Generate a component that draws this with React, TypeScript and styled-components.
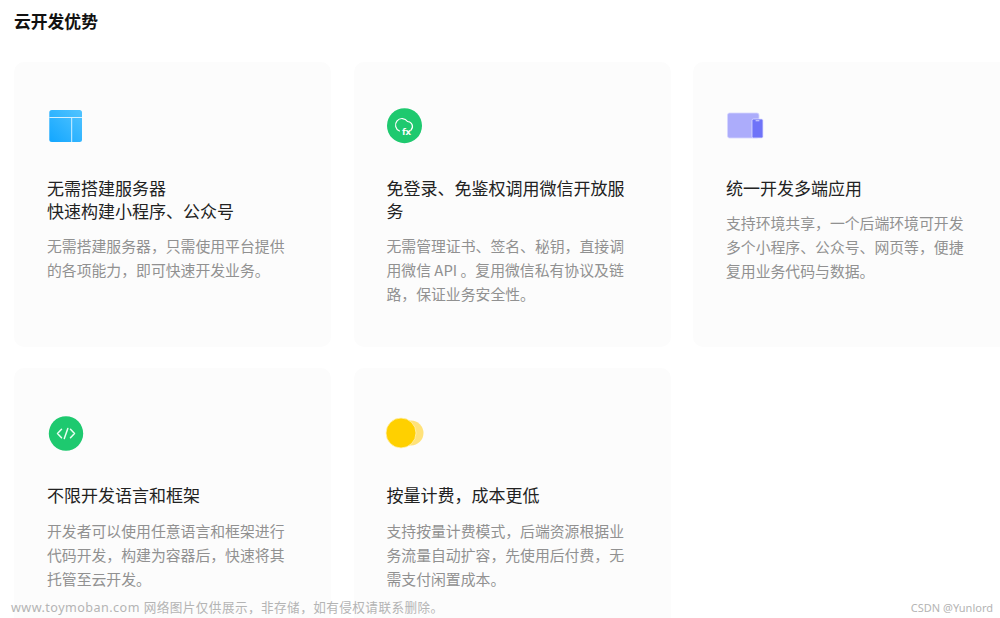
import React from "react";
import styled, { createGlobalStyle } from "styled-components";

const Global = createGlobalStyle`
  html, body { margin: 0; padding: 0; background: #fff; }
  body { width: 1000px; height: 618px; overflow: hidden; font-family: "Noto Sans CJK SC", "Noto Sans", sans-serif; }
`;
const Page = styled.div`
  position: relative;
  width: 1000px;
  height: 618px;
  overflow: hidden;
  padding: 9px 0 0 14px;
  box-sizing: border-box;
`;
const Heading = styled.h2`
  margin: 0 0 27.5px;
  font-size: 16.8px;
  line-height: 25px;
  font-weight: 700;
  color: #111;
`;
const Grid = styled.div`
  display: grid;
  grid-template-columns: repeat(3, 317px);
  grid-auto-rows: 285.5px;
  column-gap: 22.5px;
  row-gap: 21px;
  width: 1010px;
`;
const Card = styled.section`
  background: #fcfcfc;
  border-radius: 10px;
  padding: 46.5px 33px 0;
  box-sizing: border-box;
`;
const IconBox = styled.div`
  width: 36px;
  height: 36px;
  margin-bottom: 32px;
  svg { display: block; overflow: visible; }
`;
const Title = styled.h3<{ $gap: number }>`
  margin: 0 0 ${(p) => p.$gap}px;
  min-height: 23px;
  font-size: 17px;
  line-height: 23px;
  font-weight: 400;
  color: #222;
`;
const Desc = styled.p`
  margin: 0;
  font-size: 14.85px;
  line-height: 24px;
  color: #919191;
`;
const Mark = styled.div`
  position: absolute;
  bottom: 0;
  line-height: 20px;
  color: #b4b4b4;
`;
const LeftMark = styled(Mark)`
  left: 11px;
  font-family: "Noto Sans", "Noto Sans CJK SC", sans-serif;
  font-size: 12.6px;
  letter-spacing: 0.45px;
`;
const RightMark = styled(Mark)`
  right: 7px;
  font-family: "Noto Sans", sans-serif;
  font-size: 11px;
`;

const Panel = () => (
  <svg width="36" height="36" viewBox="0 0 36 36">
    <defs>
      <linearGradient id="pg" x1="0" y1="1" x2="1" y2="0">
        <stop offset="0" stopColor="#12a6ff" />
        <stop offset="1" stopColor="#52c4ff" />
      </linearGradient>
    </defs>
    <rect x="2.3" y="2" width="32.7" height="32" rx="2.5" fill="url(#pg)" />
    <path d="M2.3 9.5H35M24.7 9.5V34" stroke="#d4f0ff" strokeWidth="1" fill="none" />
  </svg>
);
const CloudFx = () => (
  <svg width="36" height="36" viewBox="0 0 36 36">
    <circle cx="17.5" cy="17.7" r="17.5" fill="#1ec96f" />
    <path
      d="M12.5 23 A6.5 6.5 0 1 1 20.5 13.5 A5 5 0 0 1 24 22"
      stroke="#fff" strokeWidth="1.2" fill="none" strokeLinecap="round"
    />
    <text x="19.5" y="27" textAnchor="middle" fontSize="9.5" fontWeight="700" fill="#fff" fontFamily="Noto Sans, sans-serif">fx</text>
  </svg>
);
const Devices = () => (
  <svg width="38" height="36" viewBox="0 0 38 36">
    <rect x="1.5" y="5" width="31.5" height="25" rx="2" fill="#acacfb" stroke="#d6d6ff" strokeWidth="0.8" />
    <rect x="26" y="11" width="11" height="19" rx="1.5" fill="#6f73f8" stroke="#e0e0ff" strokeWidth="0.8" />
    <rect x="29.5" y="12.3" width="4" height="1" rx="0.5" fill="#dcdcff" />
  </svg>
);
const Code = () => (
  <svg width="36" height="36" viewBox="0 0 36 36">
    <circle cx="19" cy="18.5" r="17.2" fill="#1ec96f" />
    <path d="M14.5 14.2l-4 4.300 4 4.300M23.5 14.2l4 4.300-4 4.300M20.800 13.500l-3.500 10" stroke="#e8fff2" strokeWidth="1.5" fill="none" strokeLinecap="round" strokeLinejoin="round" />
  </svg>
);
const Coins = () => (
  <svg width="38" height="36" viewBox="0 0 38 36">
    <circle cx="24" cy="18" r="12.5" fill="#ffe27a" />
    <circle cx="14" cy="18" r="15" fill="#ffd000" stroke="#fff1b8" strokeWidth="0.8" />
  </svg>
);

const items = [
  { icon: <Panel />, gap: 11.5, title: <>无需搭建服务器<br />快速构建小程序、公众号</>, desc: "无需搭建服务器，只需使用平台提供的各项能力，即可快速开发业务。" },
  { icon: <CloudFx />, gap: 11.5, title: <>免登录、免鉴权调用微信开放服务</>, desc: "无需管理证书、签名、秘钥，直接调用微信 API 。复用微信私有协议及链路，保证业务安全性。" },
  { icon: <Devices />, gap: 11.5, title: <>统一开发多端应用</>, desc: "支持环境共享，一个后端环境可开发多个小程序、公众号、网页等，便捷复用业务代码与数据。" },
  { icon: <Code />, gap: 13, title: <>不限开发语言和框架</>, desc: "开发者可以使用任意语言和框架进行代码开发，构建为容器后，快速将其托管至云开发。" },
  { icon: <Coins />, gap: 13, title: <>按量计费，成本更低</>, desc: "支持按量计费模式，后端资源根据业务流量自动扩容，先使用后付费，无需支付闲置成本。" },
];

export default function App() {
  return (
    <Page>
      <Global />
      <Heading>云开发优势</Heading>
      <Grid>
        {items.map((it, i) => (
          <Card key={i}>
            <IconBox>{it.icon}</IconBox>
            <Title $gap={it.gap}>{it.title}</Title>
            <Desc>{it.desc}</Desc>
          </Card>
        ))}
      </Grid>
      <LeftMark>www.toymoban.com 网络图片仅供展示，非存储，如有侵权请联系删除。</LeftMark>
      <RightMark>CSDN @Yunlord</RightMark>
    </Page>
  );
}
